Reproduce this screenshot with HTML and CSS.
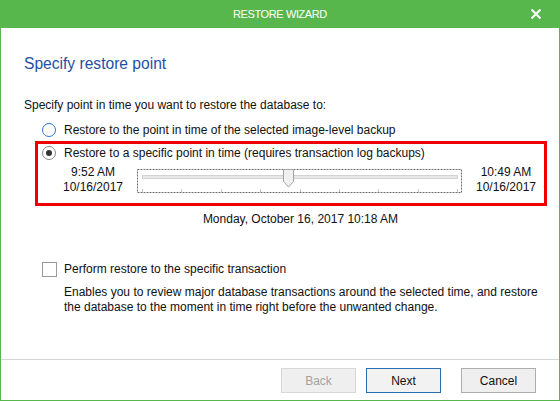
FILE: index.html
```html
<!DOCTYPE html>
<html>
<head>
<meta charset="utf-8">
<link rel="stylesheet" href="styles.css">
</head>
<body>
<div class="window">
  <div class="titlebar">
    <span></span>
    <span class="title">RESTORE WIZARD</span>
    <span class="close">
      <svg width="10" height="10" viewBox="0 0 10 10"><path d="M0.5 0.5 L9.5 9.5 M9.5 0.5 L0.5 9.5" stroke="#fff" stroke-width="2" fill="none"/></svg>
    </span>
  </div>
  <div class="content">
    <h1 class="heading">Specify restore point</h1>
    <p class="intro">Specify point in time you want to restore the database to:</p>
    <label class="option option-outer">
      <span class="radio radio-hover"></span>
      <span>Restore to the point in time of the selected image-level backup</span>
    </label>
    <div class="highlight">
      <label class="option">
        <span class="radio radio-checked"></span>
        <span>Restore to a specific point in time (requires transaction log backups)</span>
      </label>
      <div class="slider-row">
        <div class="time time-start">9:52 AM<br>10/16/2017</div>
        <div class="slider">
          <svg width="325" height="24" viewBox="0 0 325 24">
            <rect x="0.5" y="0.5" width="324" height="23" fill="none" stroke="#6f6f6f" stroke-dasharray="2 1"/>
            <rect x="5.5" y="6.5" width="315" height="3" fill="#e7e7e7" stroke="#d2d2d2"/>
            <g stroke="#c6c6c6">
              <line x1="5.5" y1="20" x2="5.5" y2="23"/>
              <line x1="44.5" y1="20" x2="44.5" y2="23"/>
              <line x1="84.5" y1="20" x2="84.5" y2="23"/>
              <line x1="123.5" y1="20" x2="123.5" y2="23"/>
              <line x1="163.5" y1="20" x2="163.5" y2="23"/>
              <line x1="202.5" y1="20" x2="202.5" y2="23"/>
              <line x1="241.5" y1="20" x2="241.5" y2="23"/>
              <line x1="281.5" y1="20" x2="281.5" y2="23"/>
              <line x1="320.5" y1="20" x2="320.5" y2="23"/>
            </g>
            <polygon points="146.5,0.5 156.5,0.5 156.5,12.5 151.5,18 146.5,12.5" fill="#f0f0f0" stroke="#a4a4a4"/>
          </svg>
        </div>
        <div class="time time-end">10:49 AM<br>10/16/2017</div>
      </div>
    </div>
    <div class="current-date">Monday, October 16, 2017 10:18 AM</div>
    <label class="option check-row">
      <span class="checkbox"></span>
      <span>Perform restore to the specific transaction</span>
    </label>
    <p class="desc">Enables you to review major database transactions around the selected time, and restore<br>the database to the moment in time right before the unwanted change.</p>
  </div>
  <div class="footer">
    <button class="btn btn-disabled" disabled>Back</button>
    <button class="btn btn-default">Next</button>
    <button class="btn btn-cancel">Cancel</button>
  </div>
</div>
</body>
</html>
```

FILE: styles.css
```css
html, body {
  margin: 0;
  padding: 0;
  background: #ffffff;
}

body {
  font-family: "Liberation Sans", Arial, sans-serif;
  font-size: 12px;
  color: #111111;
}

.window {
  width: 560px;
  height: 401px;
  box-sizing: border-box;
  border: 1px solid #57b74c;
  border-top: none;
  display: flex;
  flex-direction: column;
  background: #ffffff;
}

.titlebar {
  height: 28px;
  margin: 0 -1px;
  background: #57b74c;
  color: #ffffff;
  display: grid;
  grid-template-columns: 1fr auto 1fr;
  align-items: center;
}

.title {
  font-size: 11px;
  letter-spacing: -0.4px;
  line-height: 28px;
}

.close {
  justify-self: end;
  margin-right: 19px;
  display: flex;
  height: 10px;
  margin-top: -1px;
}

.content {
  flex: 1;
  display: flex;
  flex-direction: column;
  align-items: flex-start;
}

.heading {
  margin: 26px 0 0 23px;
  font-size: 15.6px;
  line-height: 20px;
  font-weight: normal;
  color: #1f4fa3;
}

.intro {
  margin: 23px 0 0 23px;
  line-height: 16px;
}

.option {
  display: flex;
  align-items: center;
  height: 16px;
  line-height: 16px;
  white-space: nowrap;
}

.option-outer {
  margin: 9px 0 0 41px;
}

.radio {
  width: 14px;
  height: 14px;
  box-sizing: border-box;
  border-radius: 50%;
  border: 1px solid #8a8a8a;
  margin-right: 8px;
  display: flex;
  align-items: center;
  justify-content: center;
  background: #fff;
}

.radio-hover {
  border-color: #2a78cc;
}

.radio-checked::after {
  content: "";
  width: 6px;
  height: 6px;
  border-radius: 50%;
  background: #333333;
}

.highlight {
  margin: 3px 0 0 34px;
  width: 512px;
  box-sizing: border-box;
  border: 3px solid #ee0000;
  padding: 1px 0 8px 4px;
}

.slider-row {
  display: flex;
  align-items: flex-start;
  margin-top: 4px;
}

.time {
  line-height: 15px;
  text-align: center;
  width: 66px;
}

.time-start {
  margin-left: 18px;
}

.slider {
  margin: 4px 0 0 11px;
  height: 24px;
  display: flex;
}

.time-end {
  margin-left: 12px;
  width: 64px;
}

.current-date {
  margin: 5px 0 0 136px;
  width: 327px;
  text-align: center;
  line-height: 16px;
}

.check-row {
  margin: 34px 0 0 41px;
}

.checkbox {
  width: 15px;
  height: 15px;
  box-sizing: border-box;
  border: 1px solid #9a9a9a;
  margin-right: 7px;
  background: #fff;
}

.desc {
  margin: 8px 0 0 63px;
  line-height: 15px;
}

.footer {
  border-top: 1px solid #d4d4d4;
  height: 41px;
  display: flex;
  justify-content: flex-end;
  align-items: flex-start;
  padding: 8px 23px 0 0;
  box-sizing: border-box;
}

.btn {
  width: 75px;
  height: 25px;
  box-sizing: border-box;
  font-family: "Liberation Sans", Arial, sans-serif;
  font-size: 12px;
  background: #efefef;
  border: 1px solid #adadad;
  color: #111111;
  padding: 0;
  margin: 0;
}

.btn-disabled {
  border-color: #d8d8d8;
  color: #a2a2a2;
  background: #efefef;
}

.btn-default {
  margin-left: 10px;
  border-color: #2a6db0;
  background: #f2f2f2;
}

.btn-cancel {
  margin-left: 20px;
}
```
